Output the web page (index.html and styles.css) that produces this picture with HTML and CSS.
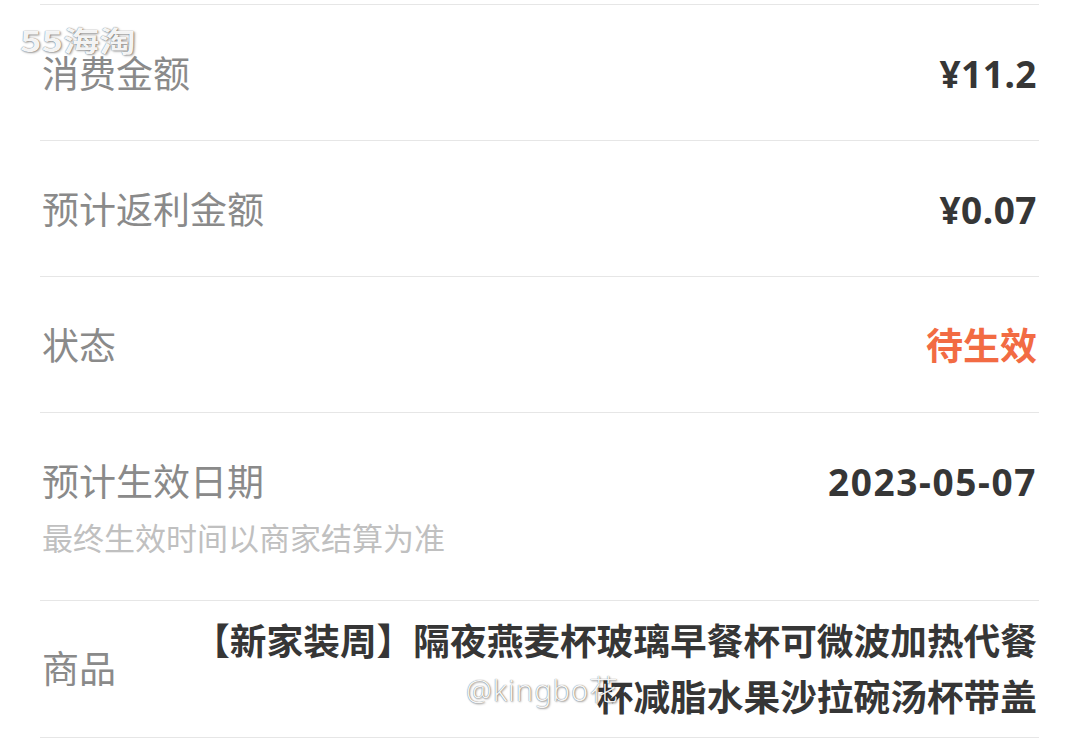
FILE: index.html
```html
<!DOCTYPE html>
<html lang="zh-CN">
<head>
    <meta charset="UTF-8">
    <meta name="viewport" content="width=device-width, initial-scale=1.0">
    <title>订单详情</title>
    <link rel="stylesheet" href="styles.css">
</head>
<body>
    <div class="detail-list">
        <div class="detail-row">
            <span class="label">消费金额</span>
            <span class="value">¥11.2</span>
        </div>
        <div class="detail-row">
            <span class="label">预计返利金额</span>
            <span class="value">¥0.07</span>
        </div>
        <div class="detail-row">
            <span class="label">状态</span>
            <span class="value status">待生效</span>
        </div>
        <div class="detail-row row-top">
            <div class="label-group">
                <div class="label">预计生效日期</div>
                <div class="hint">最终生效时间以商家结算为准</div>
            </div>
            <span class="value date">2023-05-07</span>
        </div>
        <div class="detail-row row-goods">
            <span class="label">商品</span>
            <span class="value goods-title">【新家装周】隔夜燕麦杯玻璃早餐杯可微波加热代餐杯减脂水果沙拉碗汤杯带盖</span>
        </div>
    </div>

    <div class="watermark wm-logo">55海淘</div>
    <div class="watermark wm-user">@kingbo花</div>
</body>
</html>
```

FILE: styles.css
```css
body {
    margin: 0;
    background: #fff;
    font-family: "Noto Sans", "Noto Sans CJK SC", sans-serif;
    height: 740px;
    overflow: hidden;
    position: relative;
}
.detail-list {
    padding: 4px 40px 0;
}
.detail-row {
    display: flex;
    justify-content: space-between;
    align-items: center;
    padding: 44px 2px 41px;
    border-top: 1px solid #e6e6e6;
}
.detail-row:last-child {
    border-bottom: 1px solid #e6e6e6;
}
.label {
    font-size: 37px;
    line-height: 50px;
    color: #8a8a8a;
}
.value {
    font-size: 37px;
    line-height: 50px;
    font-weight: bold;
    color: #363636;
    letter-spacing: 0.5px;
}
.status {
    color: #f26b43;
    letter-spacing: 0;
}
.row-top {
    align-items: flex-start;
    padding-bottom: 42px;
}
.hint {
    margin-top: 11px;
    font-size: 31px;
    line-height: 40px;
    color: #c0c0c0;
}
.date {
    letter-spacing: 1.6px;
}
.row-goods {
    padding: 12px 2px;
}
.goods-title {
    max-width: 850px;
    font-size: 36.7px;
    line-height: 56px;
    letter-spacing: 0;
    text-align: right;
}
.watermark {
    position: absolute;
    color: rgba(255, 255, 255, 0.95);
    text-shadow: 0 0 1px rgba(0, 0, 0, 0.6), 1px 1px 2px rgba(0, 0, 0, 0.35);
    white-space: nowrap;
}
.wm-logo {
    left: 20px;
    top: 22px;
    font-size: 28px;
    line-height: 36px;
    font-weight: bold;
    transform: scaleX(1.3);
    transform-origin: left center;
    font-family: "Noto Sans CJK SC", sans-serif;
}
.wm-user {
    left: 466px;
    top: 672px;
    font-size: 29px;
    line-height: 36px;
    font-weight: 300;
    letter-spacing: 1px;
    font-family: "Noto Sans", "Noto Sans CJK SC", sans-serif;
}
```
